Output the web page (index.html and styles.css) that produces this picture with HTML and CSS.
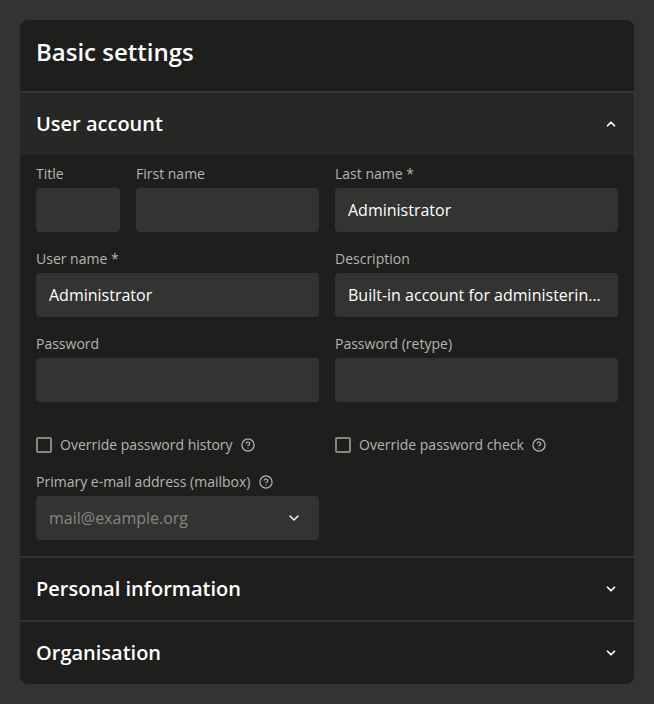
FILE: index.html
```html
<!DOCTYPE html>
<html lang="en">
<head>
<meta charset="utf-8">
<title>Basic settings</title>
<link rel="stylesheet" href="styles.css">
</head>
<body>
<svg class="defs" width="0" height="0" aria-hidden="true">
  <symbol id="down" viewBox="0 0 24 24"><path d="M6 9l6 6 6-6"/></symbol>
  <symbol id="up" viewBox="0 0 24 24"><path d="M6 15l6-6 6 6"/></symbol>
  <symbol id="help" viewBox="0.5 0.5 23 23"><circle cx="12" cy="12" r="10"/><path d="M9.09 9a3 3 0 0 1 5.83 1c0 2-3 3-3 3M12 17h.01"/></symbol>
</svg>
<main class="card">
  <h1 class="card-title">Basic settings</h1>
  <section class="panel">
    <h2 class="panel-head open">User account<svg class="icon chevron"><use href="#up"/></svg></h2>
    <div class="form">
      <div class="row">
        <div class="name-pair">
          <div class="field"><label class="label" for="title">Title</label><input class="input" id="title"></div>
          <div class="field"><label class="label" for="first">First name</label><input class="input" id="first"></div>
        </div>
        <div class="field"><label class="label" for="last">Last name *</label><input class="input" id="last" value="Administrator"></div>
      </div>
      <div class="row">
        <div class="field"><label class="label" for="user">User name *</label><input class="input" id="user" value="Administrator"></div>
        <div class="field"><label class="label" for="desc">Description</label><input class="input" id="desc" value="Built-in account for administering the domain"></div>
      </div>
      <div class="row">
        <div class="field"><label class="label" for="pw">Password</label><input class="input" id="pw" type="password"></div>
        <div class="field"><label class="label" for="pw2">Password (retype)</label><input class="input" id="pw2" type="password"></div>
      </div>
      <div class="row checks">
        <label class="check"><input class="box" type="checkbox"><span class="check-text">Override password history</span><svg class="icon help"><use href="#help"/></svg></label>
        <label class="check"><input class="box" type="checkbox"><span class="check-text">Override password check</span><svg class="icon help"><use href="#help"/></svg></label>
      </div>
      <div class="row">
        <div class="field">
          <label class="label" for="mail">Primary e-mail address (mailbox)<svg class="icon help"><use href="#help"/></svg></label>
          <div class="combo"><input class="input" id="mail" placeholder="mail@example.org"><svg class="icon arrow"><use href="#down"/></svg></div>
        </div>
      </div>
    </div>
  </section>
  <section class="panel"><h2 class="panel-head">Personal information<svg class="icon chevron"><use href="#down"/></svg></h2></section>
  <section class="panel"><h2 class="panel-head">Organisation<svg class="icon chevron"><use href="#down"/></svg></h2></section>
</main>
</body>
</html>
```
FILE: styles.css
```css
* { box-sizing: border-box; }
body {
  margin: 0;
  padding: 20px;
  background: #333331;
  color: #fff;
  font: 16px/24px "Open Sans", sans-serif;
}
.defs { position: absolute; }
.card {
  background: #1e1e1d;
  border-radius: 8px;
  overflow: hidden;
}
.card-title {
  margin: 0;
  height: 71px;
  padding: 14px 16px 0;
  font-size: 24px;
  line-height: 36px;
  font-weight: 600;
}
.panel { border-top: 2px solid #333331; }
.panel-head {
  display: flex;
  align-items: center;
  justify-content: space-between;
  margin: 0;
  height: 62px;
  padding: 0 16px;
  font-size: 20px;
  line-height: 30px;
  font-weight: 600;
}
.open { background: #272726; }
.icon {
  flex: none;
  width: 16px;
  height: 16px;
  fill: none;
  stroke: currentColor;
  stroke-width: 2;
  stroke-linecap: round;
  stroke-linejoin: round;
}
.chevron { width: 14px; height: 14px; stroke-width: 3; }
.form { padding: 8px 16px 16px; }
.row {
  display: grid;
  grid-template-columns: 1fr 1fr;
  gap: 16px;
  margin-bottom: 16px;
}
.row:last-child { margin-bottom: 0; }
.name-pair {
  display: grid;
  grid-template-columns: 84px 1fr;
  gap: 16px;
}
.field { min-width: 0; }
.label, .check {
  display: flex;
  align-items: center;
  color: #b5b5b1;
  font-size: 14px;
  line-height: 20px;
}
.label { height: 22px; margin-bottom: 3px; }
.input {
  display: block;
  width: 100%;
  height: 44px;
  padding: 0 13px;
  border: 0;
  border-radius: 4px;
  background: #333331;
  color: #fff;
  font: inherit;
  outline: 0;
  text-overflow: ellipsis;
}
.input::placeholder { color: #868681; opacity: 1; }
.row.checks { margin: 32px 0 15px; }
.check { height: 22px; }
.check-text { margin-bottom: 1px; }
.box {
  appearance: none;
  width: 16px;
  height: 16px;
  margin: 0 8px 0 0;
  border: 2px solid #868681;
  border-radius: 2px;
}
.help { width: 14px; height: 14px; margin-left: 8px; }
.label .help { margin: 0 0 0 9px; }
.combo { position: relative; }
.arrow {
  position: absolute;
  right: 17px;
  top: 14px;
}
```
